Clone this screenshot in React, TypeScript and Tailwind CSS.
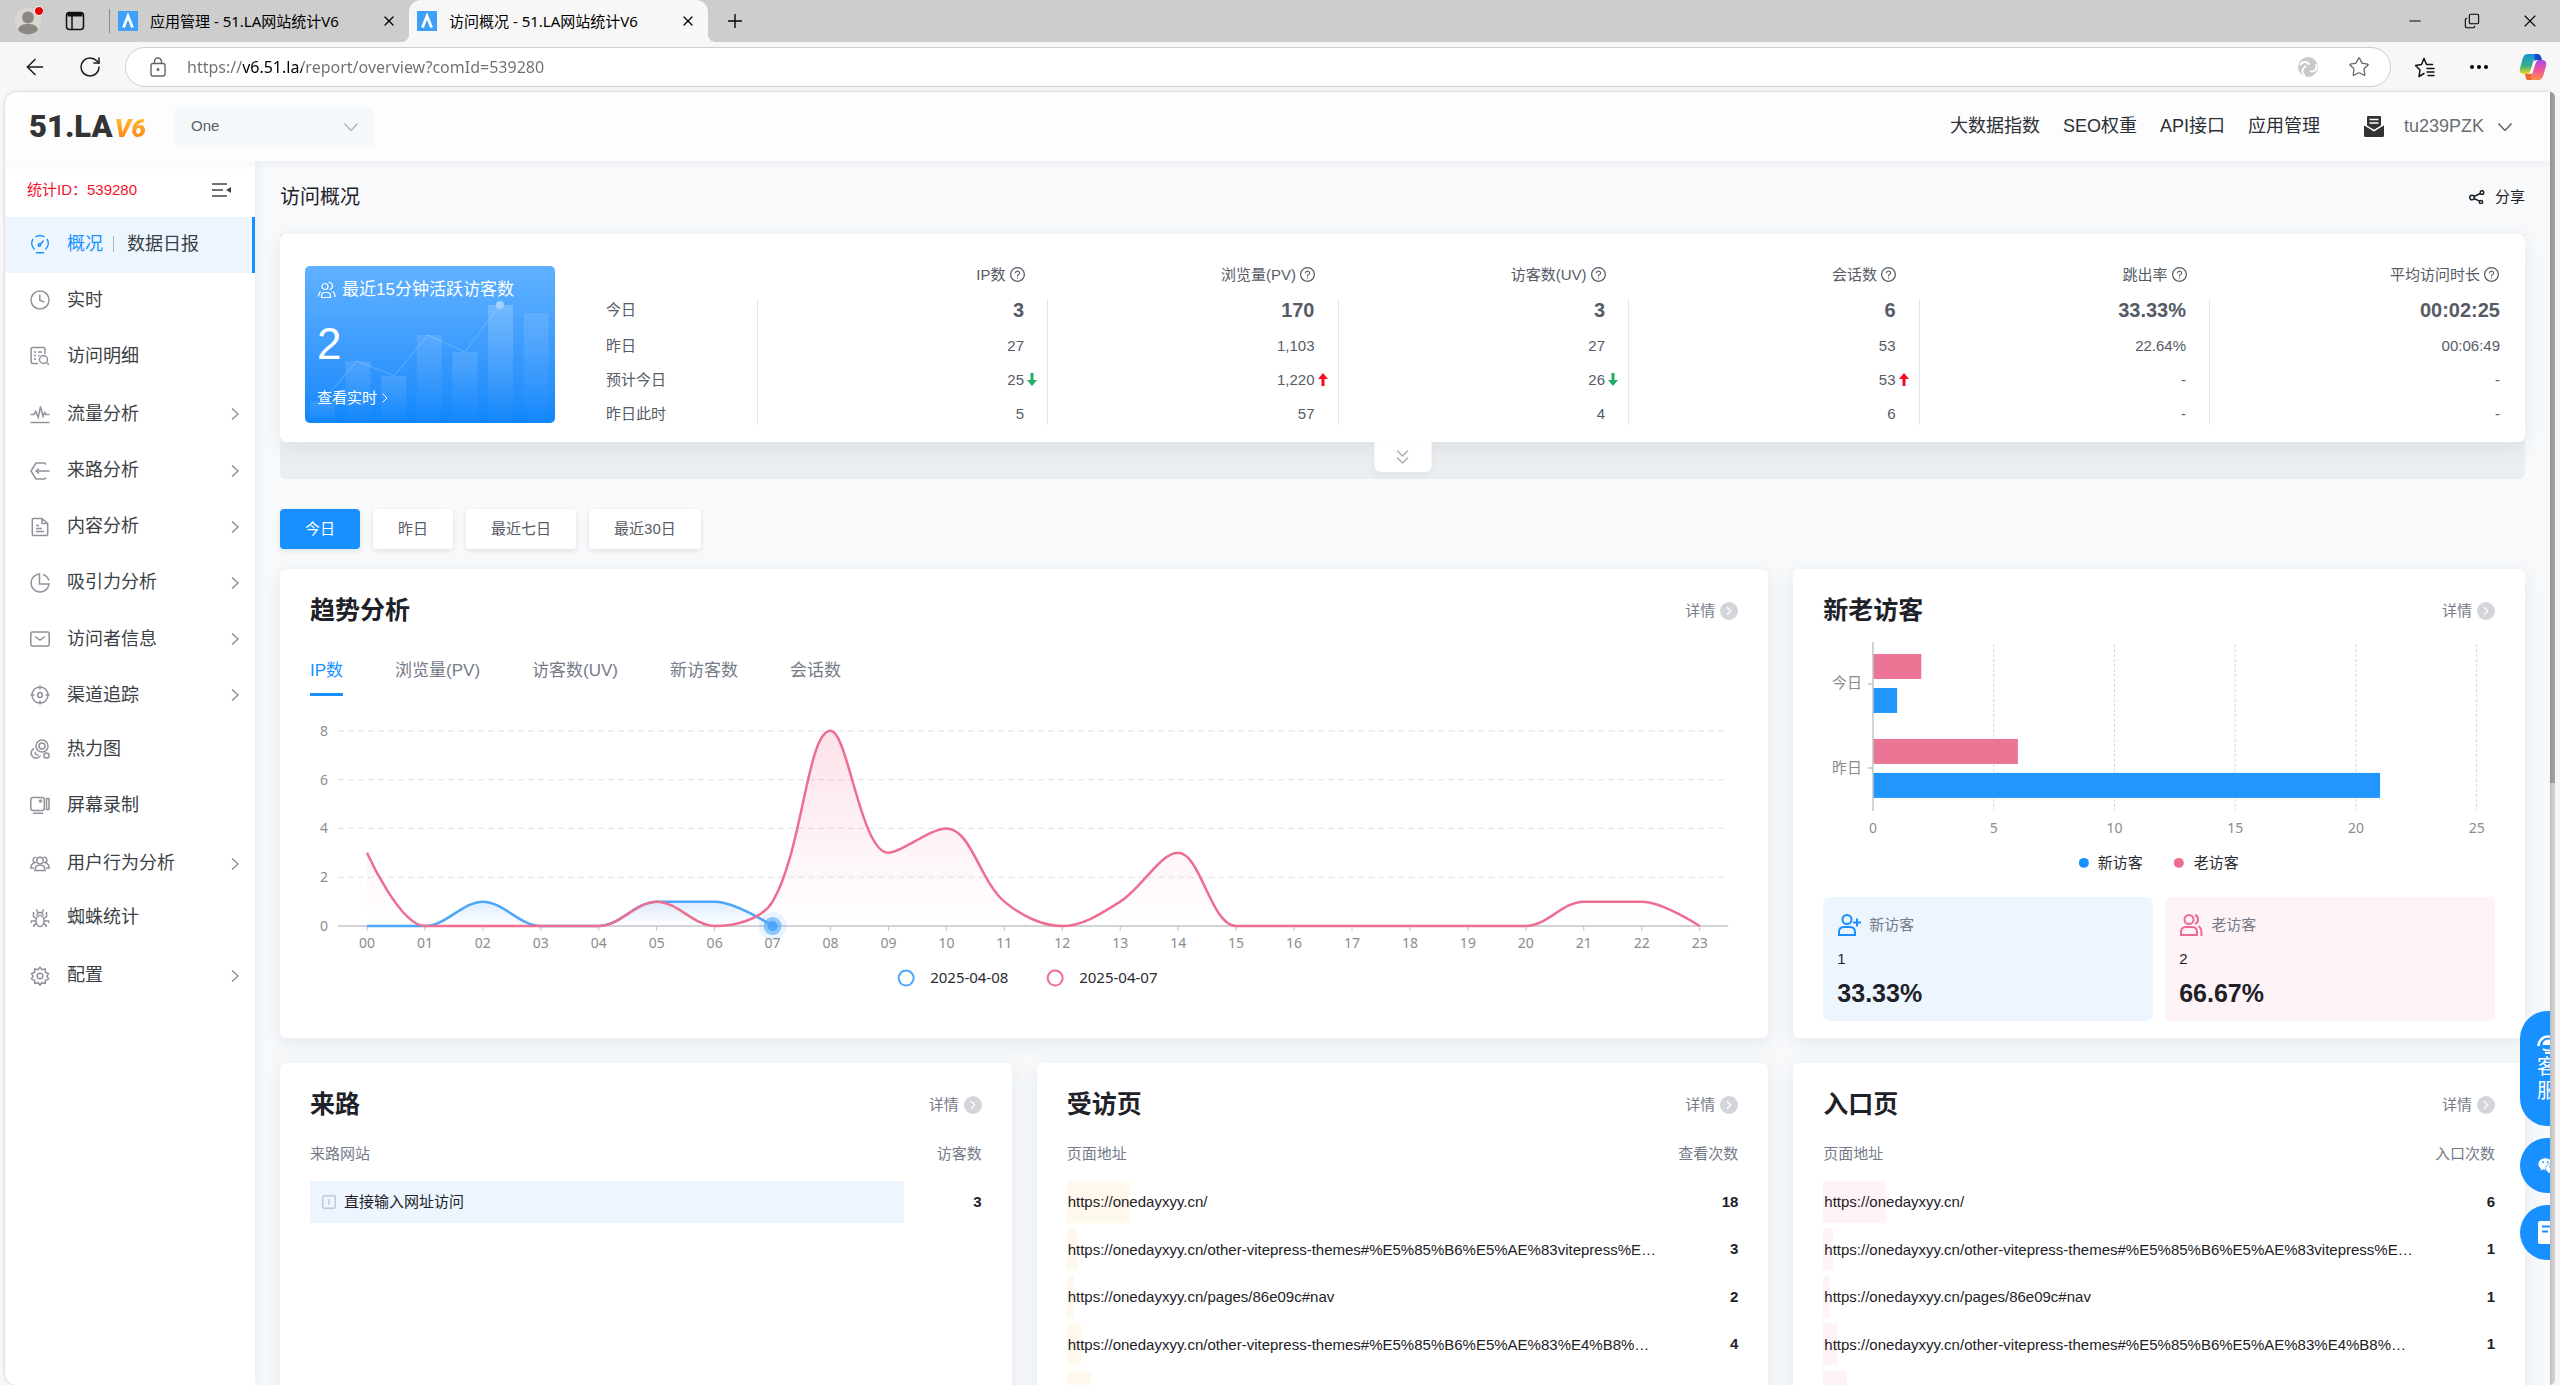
import {ReactNode, useState} from "react";
import clsx from "clsx";
import {ArrowLeft, ChevronRight, ChevronsDown, Copy, Ellipsis, Minus, Plus, RotateCw, Star, X} from "lucide-react";
import {AiFillWechat, AiOutlineQuestionCircle} from "react-icons/ai";

type Point = { x: number; y: number };

const menuIcons: { [name: string]: ReactNode } = {
    gauge: <><path d="M4.500 15.500A8.500 8.500 0 0 1 3 5M17 5a8.500 8.500 0 0 1-1.500 10.500M5.500 2.800a8.500 8.500 0 0 1 9 0M10.500 10.200l3-3.700M6 18.800h8" /><circle cx="9.400" cy="11" r="1.200" /></>,
    clock: <><circle cx="10" cy="10" r="9" /><path d="M9.800 4.500v5.800l4.600 1.800" /></>,
    detail: <><path d="M8 17.500H2.500a1.400 1.400 0 0 1-1.400-1.400V3A1.400 1.400 0 0 1 2.500 1.600h11A1.400 1.400 0 0 1 15 3v5M4 6h2M8 6h4M4 9.500h2M8 9.500h1.500M4 13h2" /><circle cx="13.500" cy="13.500" r="4" /><path d="M16.500 16.500l2.500 2.300" /></>,
    pulse: <path d="M.5 10.500H4l1.800-3 2.400 6 2.300-11 2.500 10 1.700-4 1.300 2h3.500M.5 18.500h19" />,
    source: <path d="M16 3.500l-1.500-1.500H6L1 10l5 8h8.500l1.500-1.500M19.500 10H6M9 7.500L6 10l3 2.500" />,
    doc: <path d="M12 1.500H3.500A1.200 1.200 0 0 0 2.300 2.700v14.600a1.200 1.200 0 0 0 1.200 1.200h13a1.200 1.200 0 0 0 1.200-1.200V6.500zM12 1.500v5h5.500M6 8.500h3M6 11.500h6M6 14.500h8" />,
    pie: <><path d="M9.500 1A9 9 0 1 0 19 11H9.500z" /><path d="M13 1.500A9 9 0 0 1 18.800 7.500" /></>,
    mail: <><rect x=".8" y="3" width="18.400" height="14" rx="1.500" /><path d="M5 7.500l5 3.500 5-3.500" /></>,
    target: <><circle cx="10" cy="10" r="8" /><circle cx="10" cy="10" r="2.400" /><path d="M10 .5v4M10 15.500v4M.5 10h4M15.500 10h4" /></>,
    heat: <><circle cx="12" cy="7" r="6" /><circle cx="12" cy="7" r="3" /><path d="M4 9.500a5 5 0 1 0 6.500 7M5.500 13a2 2 0 0 0 3 2.500" /><circle cx="16.500" cy="16.500" r="2.600" /></>,
    record: <><rect x=".8" y="2.500" width="13.500" height="13" rx="2" /><path d="M16.500 3.500H19v11h-2.500zM3 18.200h10" /><circle cx="10.500" cy="6" r="1" /></>,
    users: <><circle cx="10" cy="6.500" r="3.300" /><path d="M5 16.500c0-4 2-5.500 5-5.500s5 1.500 5 5.500zM6.500 3.500a2.600 2.600 0 1 0-1.500 5C2 9.500.8 11 .8 14H4M13.500 3.500a2.600 2.600 0 1 1 1.500 5c3 1 4.200 2.500 4.200 5.500H16" /></>,
    spider: <><ellipse cx="10" cy="13" rx="4" ry="5.500" /><path d="M7 7.500a3 3 0 0 1 6 0M6.200 10.500L3.500 8.500V4M13.800 10.500l2.700-2V4M6 13H1.500L.8 15M14 13h4.500l.7 2M6.500 15.500L4 17v2M13.500 15.500L16 17v2M8 4.500L6.500 1.500M12 4.500l1.500-3" /></>,
    gear: <><path d="M10 1.200l2 2.500 3.200-.7.300 3.200 3 1.400-1.500 2.600 1.500 2.700-3 1.300-.3 3.200-3.200-.7-2 2.400-2-2.400-3.200.7-.3-3.200-3-1.300L3 10.200 1.500 7.600l3-1.400.3-3.200 3.200.7z" /><circle cx="10" cy="10" r="2.800" /></>,
};

const menu = [
    { icon: "gauge", label: "概况", extra: "数据日报" },
    { icon: "clock", label: "实时" },
    { icon: "detail", label: "访问明细" },
    { icon: "pulse", label: "流量分析", sub: true },
    { icon: "source", label: "来路分析", sub: true },
    { icon: "doc", label: "内容分析", sub: true },
    { icon: "pie", label: "吸引力分析", sub: true },
    { icon: "mail", label: "访问者信息", sub: true },
    { icon: "target", label: "渠道追踪", sub: true },
    { icon: "heat", label: "热力图" },
    { icon: "record", label: "屏幕录制" },
    { icon: "users", label: "用户行为分析", sub: true },
    { icon: "spider", label: "蜘蛛统计" },
    { icon: "gear", label: "配置", sub: true },
];

const metrics = [
    { name: "IP数", values: ["3", "27", "25", "5"], trend: "down" },
    { name: "浏览量(PV)", values: ["170", "1,103", "1,220", "57"], trend: "up" },
    { name: "访客数(UV)", values: ["3", "27", "26", "4"], trend: "down" },
    { name: "会话数", values: ["6", "53", "53", "6"], trend: "up" },
    { name: "跳出率", values: ["33.33%", "22.64%", "-", "-"] },
    { name: "平均访问时长", values: ["00:02:25", "00:06:49", "-", "-"] },
];

const today = [0, 0, 1, 0, 0, 1, 1, 0];
const yesterday = [3, 0, 0, 0, 0, 1, 0, 1, 8, 3, 4, 1, 0, 1, 3, 0, 0, 0, 0, 0, 0, 1, 1, 0];

const urls = [
    "https://onedayxyy.cn/",
    "https://onedayxyy.cn/other-vitepress-themes#%E5%85%B6%E5%AE%83vitepress%E…",
    "https://onedayxyy.cn/pages/86e09c#nav",
    "https://onedayxyy.cn/other-vitepress-themes#%E5%85%B6%E5%AE%83%E4%B8%…",
    "",
];
const urlBars = [63, 10, 7, 14, 24];

const smooth = 0.35;

const clamp = (v: number, a: number, b: number) => Math.max(Math.min(v, Math.max(a, b)), Math.min(a, b));

// bezier through all points, control points never leave the segment's box
function smoothPath(points: Point[]) {
    let d = `M${points[0].x},${points[0].y}`;
    let cp0 = points[0];
    for (let i = 1; i < points.length; i++) {
        const prev = points[i - 1];
        const cur = points[i];
        const next = points[i + 1];
        let cp1 = cur;
        let nextCp0 = cur;
        if (next) {
            const lenPrev = Math.hypot(cur.x - prev.x, cur.y - prev.y);
            const lenNext = Math.hypot(next.x - cur.x, next.y - cur.y);
            const ratio = lenNext / (lenNext + lenPrev);
            const nx = clamp(cur.x + (next.x - prev.x) * smooth * ratio, cur.x, next.x);
            const ny = clamp(cur.y + (next.y - prev.y) * smooth * ratio, cur.y, next.y);
            cp1 = {
                x: clamp(cur.x - (nx - cur.x) * lenPrev / lenNext, prev.x, cur.x),
                y: clamp(cur.y - (ny - cur.y) * lenPrev / lenNext, prev.y, cur.y),
            };
            nextCp0 = {
                x: cur.x + (cur.x - cp1.x) * lenNext / lenPrev,
                y: cur.y + (cur.y - cp1.y) * lenNext / lenPrev,
            };
        }
        d += `C${cp0.x},${cp0.y} ${cp1.x},${cp1.y} ${cur.x},${cur.y}`;
        cp0 = nextCp0;
    }
    return d;
}

function Favicon() {
    return (
        <svg viewBox="0 0 20 20" className="size-5 shrink-0">
            <rect width="20" height="20" fill="#3fa0f7" />
            <path d="M5.500 16.500L10 5l4.500 11.500" fill="none" stroke="#fff" strokeWidth="2.800" />
        </svg>
    );
}

function BrowserTab({title, active}: { title: string; active?: boolean }) {
    return (
        <div className={clsx("relative flex h-full w-[299px] items-center gap-3 pl-2 pr-3", active && "rounded-t-xl bg-[#f7f7f7]")}>
            {active && <span className="absolute bottom-0 -left-2 size-2 bg-[radial-gradient(circle_at_0_0,transparent_8px,#f7f7f7_8px)]" />}
            {active && <span className="absolute bottom-0 -right-2 size-2 bg-[radial-gradient(circle_at_100%_0,transparent_8px,#f7f7f7_8px)]" />}
            <Favicon />
            <span className="flex-1 whitespace-nowrap text-[15px] text-black">{title}</span>
            <button aria-label="关闭标签页"><X className="size-4 text-black" strokeWidth={1.8} /></button>
        </div>
    );
}

function BrowserChrome() {
    return (
        <div className="shrink-0 font-['Noto_Sans','Noto_Sans_CJK_SC',sans-serif]">
            <div className="flex h-[42px] items-center bg-[#cdcdcd]">
                <svg viewBox="0 0 30 30" className="ml-[13px] size-[30px]">
                    <circle cx="15" cy="15" r="13.500" fill="#d9d6d2" />
                    <circle cx="15" cy="11.500" r="6" fill="#8b8783" />
                    <path d="M5 24c1-5 5-6 10-6s9 1 10 6a13.500 13.500 0 0 1-20 0z" fill="#8b8783" />
                    <circle cx="26" cy="5" r="4.500" fill="#e60000" stroke="#fff" />
                </svg>
                <svg viewBox="0 0 20 20" className="ml-[22px] size-5" fill="none" stroke="#111" strokeWidth="1.500">
                    <rect x="1.500" y="1.500" width="17" height="17" rx="3" />
                    <path d="M7 5v13" />
                    <path d="M2.500 3.500h15" strokeWidth="4" />
                </svg>
                <span className="ml-6 h-6 w-px bg-[#8a8a8a]" />
                <BrowserTab title="应用管理 - 51.LA网站统计V6" />
                <BrowserTab title="访问概况 - 51.LA网站统计V6" active />
                <button className="ml-4" aria-label="新建标签页"><Plus className="size-[22px] text-black" strokeWidth={1.5} /></button>
                <div className="ml-auto flex items-center gap-10 pr-5 text-black">
                    <button aria-label="最小化"><Minus className="size-[18px]" strokeWidth={1.3} /></button>
                    <button aria-label="还原"><Copy className="size-4 -scale-x-100 rotate-180" strokeWidth={1.6} /></button>
                    <button aria-label="关闭"><X className="size-5" strokeWidth={1.3} /></button>
                </div>
            </div>
            <div className="flex h-[50px] items-center bg-[#f7f7f7]">
                <button className="ml-[22px]" aria-label="返回"><ArrowLeft className="size-[26px] text-[#1b1b1b]" strokeWidth={1.4} /></button>
                <button className="ml-[30px]" aria-label="刷新"><RotateCw className="size-6 text-[#1b1b1b]" strokeWidth={1.5} /></button>
                <div className="ml-[23px] flex h-10 flex-1 items-center rounded-full border border-[#cfcfcf] bg-white">
                    <svg viewBox="0 0 18 20" className="ml-[23px] h-5 w-[18px]" fill="none" stroke="#666" strokeWidth="1.400">
                        <rect x="2" y="6.500" width="14" height="12.500" rx="2" />
                        <path d="M5.500 6.500v-2a3.500 3.500 0 0 1 7 0v2" />
                        <circle cx="9" cy="12.500" r=".8" fill="#666" />
                    </svg>
                    <input
                        aria-label="地址栏"
                        className="ml-5 flex-1 bg-[linear-gradient(90deg,#6f6f6f_56px,#000_56px,#000_115px,#6f6f6f_115px)] bg-clip-text text-[16px] text-transparent outline-none"
                        defaultValue="https://v6.51.la/report/overview?comId=539280"
                    />
                    <svg viewBox="0 0 22 22" className="mr-[29px] size-[22px]">
                        <circle cx="11" cy="11" r="10" fill="#c9c9c9" />
                        <path d="M3 9c2-4 8-4 9 0M19 8c2 5-2 9-6 7M8 20c-4-3-3-8 1-10" fill="none" stroke="#fff" strokeWidth="1.800" />
                    </svg>
                    <button className="mr-5" aria-label="收藏此页"><Star className="size-[22px] text-[#666]" strokeWidth={1.4} /></button>
                </div>
                <button className="ml-[22px]" aria-label="收藏夹">
                    <svg viewBox="0 0 24 24" className="size-6" fill="none" stroke="#111" strokeWidth="1.500" strokeLinejoin="round" strokeLinecap="round">
                        <path d="M11 18.500l-5 3 1-6.500-4.500-4.500 6-1L11 3.500l2.500 6h6M14 13.500h7M14 17h7M15 20.500h6" />
                    </svg>
                </button>
                <button className="ml-[30px]" aria-label="设置"><Ellipsis className="size-6 text-black" strokeWidth={2} /></button>
                <svg viewBox="0 0 28 28" className="ml-[28px] mr-[13px] size-7">
                    <defs>
                        <linearGradient id="copilotA" x1="0" y1="0" x2="0" y2="1"><stop offset="0" stopColor="#1a8fe3" /><stop offset=".6" stopColor="#39b27c" /><stop offset="1" stopColor="#f5d21e" /></linearGradient>
                        <linearGradient id="copilotB" x1="0" y1="0" x2="0" y2="1"><stop offset="0" stopColor="#a64bf0" /><stop offset=".5" stopColor="#f0529b" /><stop offset="1" stopColor="#ff8f4a" /></linearGradient>
                    </defs>
                    <path d="M17 1H9C5 1 4 4 3 8L1 15c-1 4 1 6 4 6h3c2 0 3-2 4-5l3-10c.5-1 1-2 4-2-.5-2-1-3-2-3z" fill="url(#copilotA)" />
                    <path d="M16 1h3c2 0 3 2 4 6h-5c-2 0-3 1-3 1z" fill="#1548c9" />
                    <path d="M11 27h8c4 0 5-3 6-7l2-7c1-4-1-6-4-6h-3c-2 0-3 2-4 5l-3 10c-.5 1-1 2-4 2 .5 2 1 3 2 3z" fill="url(#copilotB)" />
                    <path d="M12 27H9c-2 0-2-2-3-6h4c2 0 3-1 3-1z" fill="#f0642f" />
                </svg>
            </div>
        </div>
    );
}

function Header() {
    return (
        <header className="relative z-10 flex h-[69px] shrink-0 items-center bg-[#fdfdfd] shadow-[0_2px_10px_rgba(30,60,90,0.05)]">
            <a href="#" className="ml-6 flex w-[122px] items-baseline font-['Roboto',sans-serif] font-black leading-none text-[#333]">
                <span className="text-[31px]">51.LA</span>
                <span className="ml-0.5 bg-gradient-to-b from-[#fcc42c] to-[#fb7d1d] bg-clip-text pr-1 text-[26px] italic text-transparent">V6</span>
            </a>
            <div className="relative ml-[23px]">
                <select aria-label="应用" className="h-10 w-[199px] appearance-none rounded-[5px] bg-[#f5f9fc] px-[17px] text-[15px] text-[#5c6066]">
                    <option>One</option>
                </select>
                <svg viewBox="0 0 14 8" className="pointer-events-none absolute right-[15px] top-4 h-2 w-3.5" fill="none" stroke="#b3b7bf" strokeWidth="1.500"><path d="M.5.5L7 7.500l6.500-7" /></svg>
            </div>
            <nav className="ml-auto flex items-center gap-[23px] text-[18px] text-[#2c2f36]">
                <a href="#">大数据指数</a>
                <a href="#">SEO权重</a>
                <a href="#">API接口</a>
                <a href="#">应用管理</a>
            </nav>
            <svg viewBox="0 0 20 21" className="ml-11 h-[21px] w-5" fill="#333">
                <path d="M4 0h12a1 1 0 0 1 1 1v9l-7 4-7-4V1a1 1 0 0 1 1-1z" />
                <path d="M0 9l10 6.500L20 9v10.500a1.500 1.500 0 0 1-1.500 1.500h-17A1.500 1.500 0 0 1 0 19.500z" />
                <path d="M5.500 3.500h9M5.500 7h9M0 8.500l10 6 10-6" stroke="#fff" strokeWidth="1.400" fill="none" />
            </svg>
            <button className="ml-5 mr-[38px] flex items-center gap-[14px] text-[18px] text-[#6b6e73]">
                tu239PZK
                <svg viewBox="0 0 14 8" className="h-2 w-3.5" fill="none" stroke="#6b6e73" strokeWidth="1.600"><path d="M.5.5L7 7.500l6.500-7" /></svg>
            </button>
        </header>
    );
}

function Sidebar() {
    return (
        <aside className="w-[250px] shrink-0 bg-white shadow-[2px_0_10px_rgba(30,60,90,0.06)]">
            <div className="flex h-14 items-center justify-between pl-[22px] pr-6 pt-0.5 text-[15px] text-[#f5132d]">
                <span>统计ID：539280</span>
                <button aria-label="收起菜单">
                    <svg viewBox="0 0 19 14" className="h-3.5 w-[19px]" fill="none" stroke="#444" strokeWidth="1.500">
                        <path d="M0 1h15M0 7h11M0 13h15" />
                        <path d="M19 4v6l-5-3z" fill="#444" stroke="none" />
                    </svg>
                </button>
            </div>
            <nav className="grid h-[786px] auto-rows-fr text-[18px] text-[#3c3f45]">
                {menu.map((item, i) => (
                    <div key={i} className={clsx("flex items-center pl-[25px] pr-4", i === 0 && "border-r-[3px] border-[#1890ff] bg-[#edf6ff]", item.sub ? "pt-0.5" : "pb-0.5")}>
                        <svg viewBox="0 0 20 20" className={clsx("size-5 shrink-0", i === 0 ? "text-[#1890ff]" : "text-[#8f929a]")} fill="none" stroke="currentColor" strokeWidth="1.500">{menuIcons[item.icon]}</svg>
                        <a href="#" className={clsx("ml-[17px]", i === 0 && "text-[#1890ff]")}>{item.label}</a>
                        {item.extra && <a href="#" className="ml-2.5 flex items-center gap-[13px]"><span className="h-4 w-px bg-[#a9b4c0]" />{item.extra}</a>}
                        {item.sub && <svg viewBox="0 0 8 12" className="ml-auto h-3 w-2" fill="none" stroke="#8f929a" strokeWidth="1.500"><path d="M1 .5L7 6l-6 5.500" /></svg>}
                    </div>
                ))}
            </nav>
        </aside>
    );
}

function TrendArrow({trend}: { trend: string }) {
    return (
        <svg viewBox="0 0 10 13" className={clsx("absolute left-full top-0.5 ml-[3px] h-[13px] w-2.5", trend === "up" ? "text-[#f80c1e]" : "rotate-180 text-[#25ad67]")} fill="currentColor">
            <path d="M5 0l5 6H6.500v7h-3V6H0z" />
        </svg>
    );
}

function ActiveVisitors() {
    const tops = [135, 95, 110, 69, 86, 39, 47];
    return (
        <div className="relative h-[157px] w-[250px] shrink-0 overflow-hidden rounded-[5px] bg-gradient-to-b from-[#5fb1ff] to-[#0d87fb] text-white">
            <svg viewBox="0 0 250 157" className="absolute inset-0 size-full">
                <defs>
                    <linearGradient id="activeBar" x1="0" y1="0" x2="0" y2="1"><stop offset="0" stopColor="#fff" stopOpacity=".2" /><stop offset="1" stopColor="#fff" stopOpacity="0" /></linearGradient>
                </defs>
                {tops.map((top, i) => <rect key={i} x={5 + i * 35.6} y={top} width="25" height={157 - top} fill="url(#activeBar)" opacity={i === 5 ? 1 : 0.6} />)}
                <path d="M18 135L52 95l37 15 34-41 37 17 35-47" fill="none" stroke="#fff" strokeOpacity=".22" />
                <circle cx="195" cy="39" r="4" fill="#a3d2ff" />
            </svg>
            <div className="relative flex h-full flex-col pl-3">
                <div className="mt-3 flex items-center gap-[5px] text-[17px] leading-6">
                    <svg viewBox="0 0 20 18" className="h-[18px] w-5" fill="none" stroke="#fff" strokeWidth="1.200">
                        <circle cx="8" cy="5.500" r="3" /><path d="M4.500 16.500v-1.500c0-2 1.500-3.500 3.500-3.500h2c2 0 3.500 1.500 3.500 3.500v1.500zM11.500 1.500a3.500 3.500 0 0 1 1 7M1.500 15.500c0-2.500.5-4 2-5M18 16c0-3-.8-5-2.500-5.500" />
                    </svg>
                    最近15分钟活跃访客数
                </div>
                <div className="mt-4 text-[44px] leading-[52px]">2</div>
                <a href="#" className="mt-4 flex items-center text-[15px] leading-6">查看实时<ChevronRight className="size-4" strokeWidth={1.5} /></a>
            </div>
        </div>
    );
}

function Summary() {
    const rows = ["今日", "昨日", "预计今日", "昨日此时"];
    return (
        <section className="mt-[23px] rounded-b-md bg-[#ebeef1] pb-[37px]">
            <div className="relative flex rounded-md bg-white px-[25px] pb-[17px] pt-8 shadow-[0_5px_20px_rgba(60,75,85,0.09)]">
                <ActiveVisitors />
                <div className="ml-[51px] min-w-0 flex-1">
                    <table className="w-full table-fixed text-[15px] leading-[22px] text-[#565b66]">
                        <thead>
                            <tr className="h-[33px] align-top leading-4">
                                <th className="w-[151px]" />
                                {metrics.map((metric, i) => (
                                    <th key={i} className={clsx("p-0 font-normal", i < 5 && "pr-[22px]")}>
                                        <span className="flex items-center justify-end gap-[3px]">{metric.name}<AiOutlineQuestionCircle className="size-[17px]" /></span>
                                    </th>
                                ))}
                            </tr>
                        </thead>
                        <tbody>
                            {rows.map((row, r) => (
                                <tr key={row} className={clsx("align-top", r === 0 ? "h-9" : r < 3 ? "h-[34px]" : "h-[22px]")}>
                                    <th className="border-r border-[#e4e6ea] p-0 text-left font-normal">{row}</th>
                                    {metrics.map((metric, i) => (
                                        <td key={i} className={clsx("p-0 text-right", i < 5 && "border-r border-[#e4e6ea] pr-[23px]", r === 0 && "text-[20px] font-bold")}>
                                            <span className="relative">
                                                {metric.values[r]}
                                                {r === 2 && metric.trend && <TrendArrow trend={metric.trend} />}
                                            </span>
                                        </td>
                                    ))}
                                </tr>
                            ))}
                        </tbody>
                    </table>
                </div>
                <button aria-label="展开" className="absolute left-1/2 top-full flex h-[30px] w-[57px] -translate-x-1/2 items-center justify-center rounded-b-md bg-white shadow-[0_5px_10px_rgba(60,75,85,0.05)]">
                    <ChevronsDown className="size-6 text-[#aeb3bb]" strokeWidth={1.6} />
                </button>
            </div>
        </section>
    );
}

function Card({title, className, children}: { title: string; className?: string; children: ReactNode }) {
    return (
        <section className={clsx("rounded-md bg-white px-[30px] pt-6 shadow-[0_5px_20px_rgba(40,65,75,0.09)]", className)}>
            <div className="flex h-9 items-center justify-between">
                <h2 className="text-[25px] font-bold text-[#1e2127]">{title}</h2>
                <a href="#" className="flex items-center gap-[5px] text-[15px] text-[#757b88]">
                    详情
                    <span className="flex size-[18px] items-center justify-center rounded-full bg-[#d3d5db]"><ChevronRight className="size-3.5 text-white" strokeWidth={2} /></span>
                </a>
            </div>
            {children}
        </section>
    );
}

function TrendChart() {
    const px = (i: number) => 28 + 57.93 * (i + 0.5);
    const py = (v: number) => 216 - v * 24.4;
    const toPoints = (values: number[]) => values.map((v, i) => ({ x: px(i), y: py(v) }));
    const blue = smoothPath(toPoints(today));
    const red = smoothPath(toPoints(yesterday));
    return (
        <svg viewBox="0 0 1428 300" className="block w-full font-['Noto_Sans',sans-serif]">
            <defs>
                <linearGradient id="areaRed" gradientUnits="userSpaceOnUse" x1="0" y1="20" x2="0" y2="216"><stop offset="0" stopColor="#ed6e91" stopOpacity=".2" /><stop offset="1" stopColor="#ed6e91" stopOpacity="0" /></linearGradient>
                <linearGradient id="areaBlue" x1="0" y1="0" x2="0" y2="1"><stop offset="0" stopColor="#4da6fa" stopOpacity=".2" /><stop offset="1" stopColor="#4da6fa" stopOpacity="0" /></linearGradient>
            </defs>
            {[0, 2, 4, 6, 8].map(v => (
                <g key={v}>
                    {v > 0 && <path d={`M28 ${py(v)}H1417`} stroke="#e4e5e7" strokeWidth="1.200" strokeDasharray="6 4" />}
                    <text x="18" y={py(v) + 5} textAnchor="end" fontSize="14" fill="#8c8c8c">{v}</text>
                </g>
            ))}
            <path d="M28 216H1418" stroke="#c4c5c8" strokeWidth="1.500" />
            {yesterday.map((_, i) => (
                <g key={i}>
                    <path d={`M${px(i)} 216v5`} stroke="#c4c5c8" />
                    <text x={px(i)} y="238" textAnchor="middle" fontSize="14" fill="#8c8c8c">{String(i).padStart(2, "0")}</text>
                </g>
            ))}
            <path d={`${blue}V216H${px(0)}Z`} fill="url(#areaBlue)" />
            <path d={blue} fill="none" stroke="#4da6fa" strokeWidth="2.500" />
            <path d={`${red}V216H${px(0)}Z`} fill="url(#areaRed)" />
            <path d={red} fill="none" stroke="#ed6e91" strokeWidth="2.500" />
            <g fill="#4da6fa">
                <circle cx={px(7)} cy="216" r="14" opacity=".12" />
                <circle cx={px(7)} cy="216" r="9" opacity=".6" />
                <circle cx={px(7)} cy="216" r="5" />
            </g>
            <g fill="none" strokeWidth="2">
                <circle cx="596" cy="268" r="7.500" stroke="#4da6fa" />
                <circle cx="745" cy="268" r="7.500" stroke="#ed6e91" />
            </g>
            <g fontSize="15" fill="#2b2b33">
                <text x="620" y="273">2025-04-08</text>
                <text x="769" y="273">2025-04-07</text>
            </g>
        </svg>
    );
}

function VisitorChart() {
    const bars = [
        { y: 24, value: 2, color: "#ec7595" },
        { y: 58, value: 1, color: "#2196ff" },
        { y: 109, value: 6, color: "#ec7595" },
        { y: 143, value: 21, color: "#2196ff" },
    ];
    return (
        <svg viewBox="0 0 672 267" className="block w-full font-['Noto_Sans','Noto_Sans_CJK_SC',sans-serif]">
            {[0, 5, 10, 15, 20, 25].map(v => (
                <g key={v}>
                    {v > 0 && <path d={`M${50 + v * 24.16} 14V181`} stroke="#d6d8dc" strokeDasharray="3 2" />}
                    <text x={50 + v * 24.16} y="203" textAnchor="middle" fontSize="14" fill="#8c8c8c">{v}</text>
                </g>
            ))}
            {bars.map((bar, i) => <rect key={i} x="50" y={bar.y} width={bar.value * 24.16} height="25" fill={bar.color} />)}
            <path d="M50 12v169M45 54h5M45 138h5" stroke="#c4c5c8" strokeWidth="1.500" />
            <g fontSize="15" fill="#8c8c8c" textAnchor="end">
                <text x="39" y="58">今日</text>
                <text x="39" y="143">昨日</text>
            </g>
            <circle cx="261" cy="233" r="5" fill="#1890ff" />
            <circle cx="356" cy="233" r="5" fill="#ed6e91" />
            <g fontSize="15" fill="#2b2b33">
                <text x="275" y="238">新访客</text>
                <text x="371" y="238">老访客</text>
            </g>
        </svg>
    );
}

function VisitorBox({label, count, percent, returning}: { label: string; count: number; percent: string; returning?: boolean }) {
    return (
        <div className={clsx("h-[124px] rounded-md px-[14px] pt-4 text-[15px]", returning ? "bg-[#fef3f7]" : "bg-[#edf6ff]")}>
            <div className="flex items-center gap-2 leading-6 text-[#757b88]">
                <svg viewBox="0 0 24 24" className="size-6" fill="none" stroke={returning ? "#ea6d90" : "#1890ff"} strokeWidth="2">
                    <circle cx="10" cy="6.500" r="4.500" />
                    <path d="M2 22v-3c0-3 2-5 5-5h6c3 0 5 2 5 5v3z" />
                    {returning ? <path d="M16 2c4 1.500 4 7.500 0 9M19.500 13c3 2 3 5 3 10" /> : <path d="M20 5.500v8M16 9.500h8" />}
                </svg>
                {label}
            </div>
            <div className="mt-2.5 leading-6 text-[#1e2127]">{count}</div>
            <div className="mt-1.5 text-[25px] font-bold leading-8 text-[#1e2127]">{percent}</div>
        </div>
    );
}

function UrlTable({headers, values, barClass}: { headers: string[]; values: (number | null)[]; barClass: string }) {
    return (
        <table className="mt-5 w-full table-fixed text-[15px]">
            <thead>
                <tr className="h-[38px] align-top text-[#757b88]">
                    <th className="p-0 text-left font-normal">{headers[0]}</th>
                    <th className="w-[78px] p-0 text-right font-normal">{headers[1]}</th>
                </tr>
            </thead>
            <tbody className="text-[#1e2127]">
                {urls.map((url, i) => (
                    <tr key={i} className="odd:h-[47px] even:h-12">
                        <td className="relative p-0 pb-[5px]">
                            <span className={clsx("absolute left-0 top-0 h-[42px]", barClass)} style={{ width: urlBars[i] }} />
                            {url && <a href="#" className="relative block truncate pl-px leading-5">{url}</a>}
                        </td>
                        <td className="p-0 pb-[5px] text-right font-bold">{values[i]}</td>
                    </tr>
                ))}
            </tbody>
        </table>
    );
}

function FloatingTools() {
    return (
        <div className="absolute left-full top-[919px] z-20 -ml-[30px] flex w-[55px] flex-col gap-3 text-white">
            <button className="flex h-[115px] flex-col items-start rounded-full bg-[#1890ff] pl-[17px] pt-[22px] text-[20px] leading-6">
                <svg viewBox="0 0 22 22" className="size-[22px]" fill="none" stroke="#fff" strokeWidth="2">
                    <path d="M1.500 13a9.500 9.500 0 0 1 19 0" strokeWidth="2.500" /><path d="M5.500 12a5.500 5.500 0 0 1 11 0z" fill="#fff" stroke="none" /><path d="M6 16c2 2 8 2 10 0M8 20h5" />
                </svg>
                <span>客</span>
                <span>服</span>
            </button>
            <button aria-label="微信" className="flex h-[55px] items-center rounded-full bg-[#1890ff] pl-[17px]"><AiFillWechat className="size-[22px]" /></button>
            <button aria-label="文档" className="flex h-[55px] items-center rounded-full bg-[#1890ff] pl-[18px]">
                <svg viewBox="0 0 20 23" className="h-[23px] w-5"><rect width="20" height="23" rx="2" fill="#fff" /><path d="M4 5.500h12M4 10.500h6" stroke="#1890ff" strokeWidth="2" /></svg>
            </button>
        </div>
    );
}

export default function App() {
    const [range, setRange] = useState<string>("今日");
    const [tab, setTab] = useState<string>("IP数");
    return (
        <div className="flex h-screen flex-col overflow-hidden bg-[#f7f7f7] font-['Liberation_Sans','Noto_Sans_CJK_SC',sans-serif]">
            <BrowserChrome />
            <div className="flex min-h-0 flex-1 pl-[5px] pr-[5px]">
                <div className="relative flex min-w-0 flex-1 flex-col overflow-hidden rounded-l-xl bg-[#f7f9fb] shadow-[0_0_3px_rgba(0,0,0,0.25)]">
                    <Header />
                    <div className="flex min-h-0 flex-1">
                        <Sidebar />
                        <main className="min-w-0 flex-1 overflow-hidden px-[25px] pt-[22px]">
                            <div className="flex items-center justify-between text-[#1e2127]">
                                <h1 className="text-[20px] leading-7">访问概况</h1>
                                <button className="flex items-center gap-2.5 text-[15px]">
                                    <svg viewBox="0 0 16 14" className="h-3.5 w-4" fill="none" stroke="#1e2127" strokeWidth="1.500">
                                        <circle cx="3" cy="7.500" r="2.300" /><circle cx="13" cy="2.500" r="1.800" /><circle cx="12" cy="12" r="1.600" /><path d="M5 6.500l6.200-3M5 8.500l5.500 2.700" />
                                    </svg>
                                    分享
                                </button>
                            </div>
                            <Summary />
                            <div className="mt-[30px] flex gap-[13px]">
                                {["今日", "昨日", "最近七日", "最近30日"].map(name => (
                                    <button key={name} onClick={() => setRange(name)} className={clsx("h-10 rounded px-[25px] text-[15px] shadow-[0_2px_5px_rgba(60,75,85,0.12)]", range === name ? "bg-[#1890ff] text-white" : "bg-white text-[#565b66]")}>{name}</button>
                                ))}
                            </div>
                            <div className="mt-5 grid grid-cols-3 gap-[25px]">
                                <Card title="趋势分析" className="col-span-2 h-[469px]">
                                    <div className="mt-[27px] flex gap-[52px] text-[17px] text-[#757b88]">
                                        {["IP数", "浏览量(PV)", "访客数(UV)", "新访客数", "会话数"].map(name => (
                                            <button key={name} onClick={() => setTab(name)} className={clsx("h-10 border-b-[3px] pb-2 leading-7", tab === name ? "border-[#1890ff] text-[#1890ff]" : "border-transparent")}>{name}</button>
                                        ))}
                                    </div>
                                    <div className="mt-[14px]"><TrendChart /></div>
                                </Card>
                                <Card title="新老访客" className="h-[469px]">
                                    <div className="mt-px"><VisitorChart /></div>
                                    <div className="grid grid-cols-2 gap-3">
                                        <VisitorBox label="新访客" count={1} percent="33.33%" />
                                        <VisitorBox label="老访客" count={2} percent="66.67%" returning />
                                    </div>
                                </Card>
                                <Card title="来路">
                                    <table className="mt-5 w-full table-fixed text-[15px]">
                                        <thead>
                                            <tr className="h-[38px] align-top text-[#757b88]">
                                                <th className="p-0 text-left font-normal">来路网站</th>
                                                <th className="w-[78px] p-0 text-right font-normal">访客数</th>
                                            </tr>
                                        </thead>
                                        <tbody className="text-[#1e2127]">
                                            <tr className="h-[42px]">
                                                <td className="bg-[#edf6ff] p-0 pl-3">
                                                    <span className="flex items-center gap-2">
                                                        <svg viewBox="0 0 14 14" className="size-3.5" fill="none" stroke="#c0c7d2" strokeWidth="1.400"><rect x=".7" y=".7" width="12.600" height="12.600" rx="1.500" /><path d="M7 4v6" /></svg>
                                                        直接输入网址访问
                                                    </span>
                                                </td>
                                                <td className="p-0 text-right font-bold">3</td>
                                            </tr>
                                        </tbody>
                                    </table>
                                </Card>
                                <Card title="受访页">
                                    <UrlTable headers={["页面地址", "查看次数"]} values={[18, 3, 2, 4, null]} barClass="bg-[#fff8ec]" />
                                </Card>
                                <Card title="入口页">
                                    <UrlTable headers={["页面地址", "入口次数"]} values={[6, 1, 1, 1, null]} barClass="bg-[#fef3f7]" />
                                </Card>
                            </div>
                        </main>
                    </div>
                    <FloatingTools />
                </div>
                <div className="w-[5px] overflow-hidden rounded-r-md bg-[#cfcfcf]"><div className="h-[691px] bg-[#a0a0a0]" /></div>
            </div>
        </div>
    );
}
